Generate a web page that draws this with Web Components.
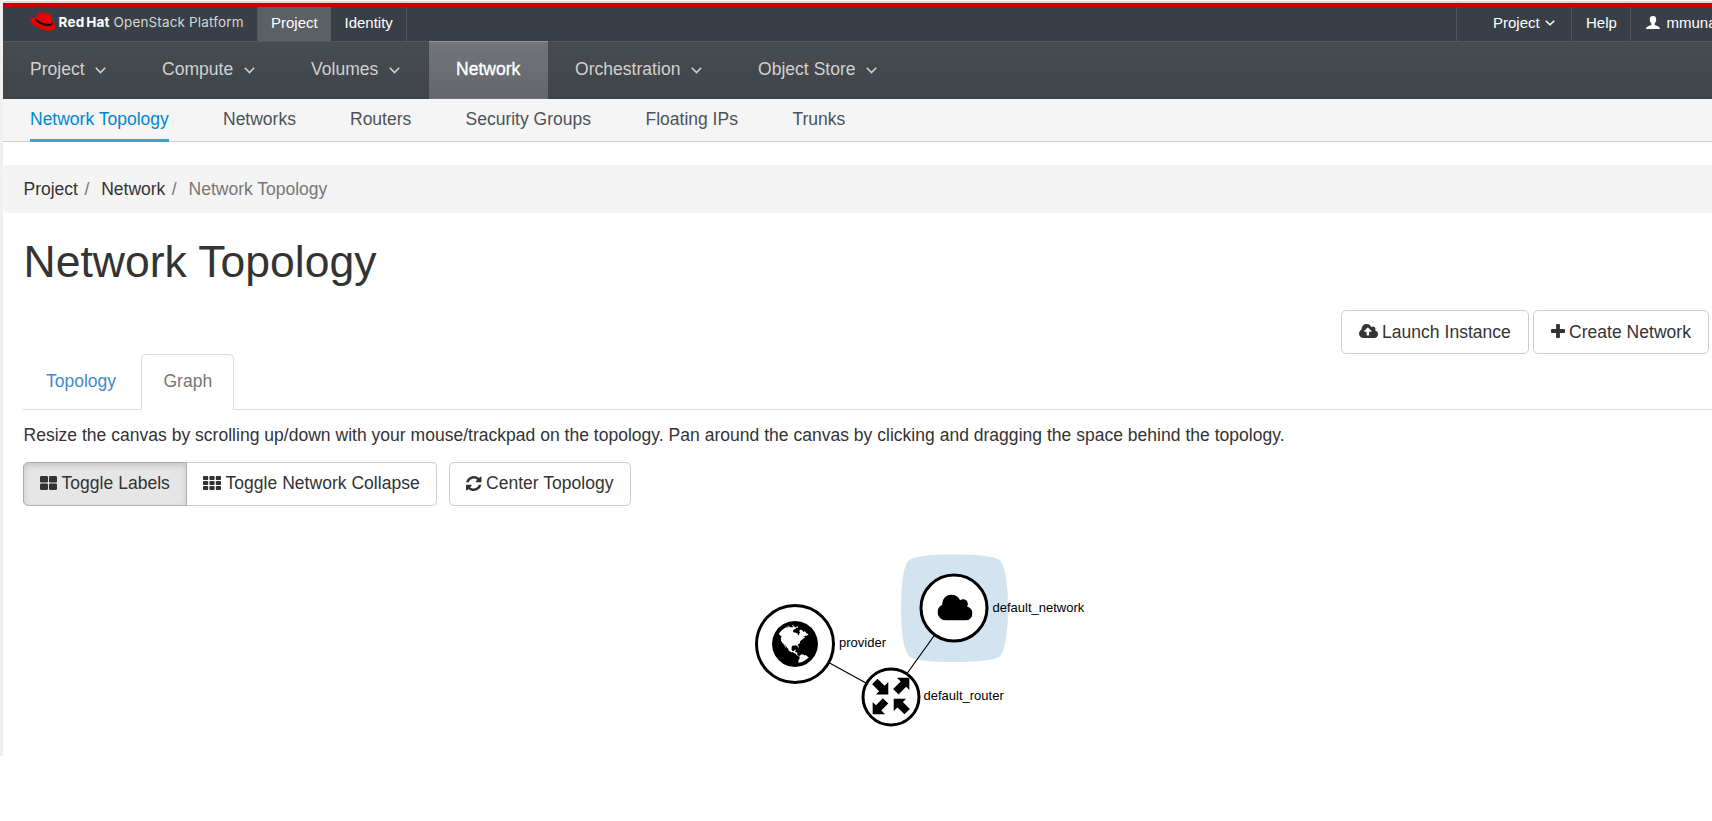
<!DOCTYPE html>
<html lang="en">
<head>
<meta charset="utf-8">
<title>Network Topology</title>
<style>
html,body{margin:0;height:821px;overflow:hidden;background:#fff;font-family:"Liberation Sans",Arial,sans-serif;font-size:17.5px;color:#333}
</style>
</head>
<body>
<os-app></os-app>
<script>
const GLYPHS = {
  cloud: ['64 128 1920 1408', '<path d="M1984 1152q0 159-112.5 271.5t-271.5 112.5h-1088q-185 0-316.5-131.5t-131.5-316.5q0-132 71-241.5t187-163.5q-2-28-2-43 0-212 150-362t362-150q158 0 286.5 88t187.5 230q70-62 166-62 106 0 181 75t75 181q0 75-41 138 129 30 213 134.5t84 239.5z"/>'],
  upload: ['64 128 1920 1408', '<path d="M1344 864q0-14-9-23l-352-352q-9-9-23-9t-23 9l-351 351q-10 12-10 24 0 14 9 23t23 9h224v352q0 13 9.5 22.5t22.5 9.5h192q13 0 22.5-9.5t9.5-22.5v-352h224q13 0 22.5-9.5t9.5-22.5zm640 288q0 159-112.5 271.5t-271.5 112.5h-1088q-185 0-316.5-131.5t-131.5-316.5q0-130 70-240t188-165q-2-30-2-43 0-212 150-362t362-150q156 0 285.5 87t188.5 231q71-62 166-62 106 0 181 75t75 181q0 76-41 138 130 31 213.5 135.5t83.5 238.5z"/>'],
  plus: ['192 128 1408 1408', '<path d="M1600 736v192q0 40-28 68t-68 28h-416v416q0 40-28 68t-68 28h-192q-40 0-68-28t-28-68v-416h-416q-40 0-68-28t-28-68v-192q0-40 28-68t68-28h416v-416q0-40 28-68t68-28h192q40 0 68 28t28 68v416h416q40 0 68 28t28 68z"/>'],
  refresh: ['128 128 1536 1536', '<path d="M1639 1056q0 5-1 7-64 268-268 434.5t-478 166.5q-146 0-282.5-55t-243.5-157l-129 129q-19 19-45 19t-45-19-19-45v-448q0-26 19-45t45-19h448q26 0 45 19t19 45-19 45l-137 137q71 66 161 102t187 36q134 0 250-65t186-179q11-17 53-117 8-23 30-23h192q13 0 22.5 9.5t9.5 22.5zm25-800v448q0 26-19 45t-45 19h-448q-26 0-45-19t-19-45 19-45l138-138q-148-137-349-137-134 0-250 65t-186 179q-11 17-53 117-8 23-30 23h-199q-13 0-22.5-9.5t-9.5-22.5v-7q65-268 270-434.5t480-166.5q146 0 284 55.5t245 156.5l130-129q19-19 45-19t45 19 19 45z"/>'],
  large: ['0 0 17 14', '<rect width="8" height="6.5" rx="1.2"/><rect x="9" width="8" height="6.5" rx="1.2"/><rect y="7.5" width="8" height="6.5" rx="1.2"/><rect x="9" y="7.5" width="8" height="6.5" rx="1.2"/>'],
  grid: ['0 0 18 14', [0,5,10].map(y => [0,6.4,12.8].map(x => `<rect x="${x}" y="${y}" width="5.2" height="4" rx=".8"/>`).join('')).join('')],
  down: ['0 0 11 7', '<path d="M.8.8 5.5 5.5 10.2.8" fill="none" stroke="currentColor" stroke-width="1.6"/>'],
  user: ['0 0 14 13', '<path d="M7 0C9.500 0 10.300 1.700 10.200 3.800 10.100 5.700 9.300 6.800 8.700 7.500V9C9.800 9.700 13.900 10.200 14 13H0C.1 10.200 4.200 9.700 5.300 9V7.500C4.700 6.800 3.900 5.700 3.800 3.800 3.700 1.700 4.500 0 7 0Z"/>'],
  globe: ['0 128 1536 1536', '<path d="M768 128q209 0 385.500 103t279.500 279.500 103 385.500-103 385.500-279.500 279.500-385.500 103-385.500-103-279.500-279.500-103-385.500 103-385.500 279.500-279.500 385.500-103zm274 521q-2 1-9.500 9.500t-13.500 9.500q2 0 4.500-5t5-11 3.500-7q6-7 22-15 14-6 52-12 34-8 51 11-2-2 9.500-13t14.500-12q3-2 15-4.500t15-7.500l2-22q-12 1-17.500-7t-6.500-21q0 2-6 8 0-7-4.500-8t-11.500 1-9 1q-10-3-15-7.500t-8-16.500-4-15q-2-5-9.500-11t-9.500-10q-1-2-2.500-5.500t-3-6.500-4-5.500-5.500-2.500-7 5-7.500 10-4.500 5q-3-2-6-1.500t-4.500 1-4.500 3-5 3.500q-3 2-8.500 3t-8.500 2q15-5-1-11-10-4-16-3 9-4 7.500-12t-8.500-14h5q-1-4-8.500-8.500t-17.500-8.500-13-6q-8-5-34-9.500t-33-.5q-5 6-4.500 10.500t4 14 3.500 12.500q1 6-5.500 13t-6.500 12q0 7 14 15.500t10 21.500q-3 8-16 16t-16 12q-5 8-1.500 18.500t10.500 16.500q2 2 1.500 4t-3.500 4.500-5.500 4-6.500 3.500l-3 2q-11 5-20.500-6t-13.500-26q-7-25-16-30-23-8-29 1-5-13-41-26-25-9-58-4 6-1 0-15-7-15-19-12 3-6 4-17.500t1-13.500q3-13 12-23 1-1 7-8.500t9.500-13.500.5-6q35 4 50-11 5-5 11.500-17t10.500-17q9-6 14-5.500t14.500 5.500 14.500 5q14 1 15.500-11t-7.500-20q12 1 3-17-4-7-8-9-12-4-27 5-8 4 2 8-1-1-9.500 10.500t-16.500 17.500-16-5q-1-1-5.500-13.500t-9.500-13.500q-8 0-16 15 3-8-11-15t-24-8q19-12-8-27-7-4-20.500-5t-19.500 4q-5 7-5.500 11.500t5 8 10.500 5.500 11.500 4 8.500 3q14 10 8 14-2 1-8.500 3.500t-11.500 4.500-6 4q-3 4 0 14t-2 14q-5-5-9-17.500t-7-16.500q7 9-25 6l-10-1q-4 0-16 2t-20.500 1-13.500-8q-4-8 0-20 1-4 4-2-4-3-11-9.500t-10-8.500q-46 15-94 41 6 1 12-1 5-2 13-6.500t10-5.500q34-14 42-7l5-5q14 16 20 25-7-4-30-1-20 6-22 12 7 12 5 18-4-3-11.500-10t-14.500-11-15-5q-16 0-22 1-146 80-235 222 7 7 12 8 4 1 5 9t2.500 11 11.500-3q9 8 3 19 1-1 44 27 19 17 21 21 3 11-10 18-1-2-9-9t-9-4q-3 5 .5 18.500t10.500 12.500q-7 0-9.500 16t-2.500 35.500-1 23.500l2 1q-3 12 5.500 34.500t21.500 19.500q-13 3 20 43 6 8 8 9 3 2 12 7.500t15 10 10 10.500q4 5 10 22.500t14 23.500q-2 6 9.500 20t10.500 23q-1 0-2.500 1t-2.500 1q3 7 15.500 14t15.500 13q1 3 2 10t3 11 8 2q2-20-24-62-15-25-17-29-3-5-5.500-15.500t-4.500-14.500q2 0 6 1.500t8.500 3.500 7.500 4 2 3q-3 7 2 17.500t12 18.500 17 19 12 13q6 6 14 19.500t0 13.500q9 0 20 10.500t17 19.500q5 8 8 26t5 24q2 7 8.500 13.500t12.500 9.500l16 8 13 7q5 2 18.500 10.500t21.500 11.500q10 4 16 4t14.500-2.500 13.500-3.500q15-2 29 15t21 21q36 19 55 11-2 1 .5 7.500t8 15.500 9 14.500 5.500 8.500q5 6 18 15t18 15q6-4 7-9-3 8 7 20t18 10q14-3 14-32-31 15-49-18 0-1-2.500-5.500t-4-8.500-2.500-8.500 0-7.500 5-3q9 0 10-3.500t-2-12.500-4-13q-1-8-11-20t-12-15q-5 9-16 8t-16-9q0 1-1.500 5.500t-1.500 6.500q-13 0-15-1 1-3 2.500-17.500t3.500-22.500q1-4 5.500-12t7.500-14.500 4-12.500-4.500-9.500-17.500-2.500q-19 1-26 20-1 3-3 10.500t-5 11.500-9 7q-7 3-24 2t-24-5q-13-8-22.500-29t-9.500-37q0-10 2.500-26.500t3-25-5.500-24.500q3-2 9-9.500t10-10.500q2-1 4.500-1.500t4.500 0 4-1.500 3-6q-1-1-4-3-3-3-4-3 7 3 28.500-1.500t27.500 1.500q15 11 22-2 0-1-2.500-9.500t-.5-13.500q5 27 29 9 3 3 15.500 5t17.500 5q3 2 7 5.500t5.500 4.500 5-.5 8.500-6.500q10 14 12 24 11 40 19 44 7 3 11 2t4.500-9.500 0-14-1.500-12.500l-1-8v-18l-1-8q-15-3-18.500-12t1.500-18.500 15-18.500q1-1 8-3.500t15.500-6.500 12.500-8q21-19 15-35 7 0 11-9-1 0-5-3t-7.500-5-4.500-2q9-5 2-16 5-3 7.500-11t7.500-10q9 12 21 2 7-8 1-16 5-7 20.500-10.500t18.500-9.500q7 2 8-2t1-12 3-12q4-5 15-9t13-5l17-11q3-4 0-4 18 2 31-11 10-11-6-20 3-6-3-9.500t-15-5.500q3-1 11.500-.5t10.500-1.500q15-10-7-16-17-5-43 12zm-163 877q206-36 351-189-3-3-12.500-4.500t-12.500-3.500q-18-7-24-8 1-7-2.500-13t-8-9-12.500-8-11-7q-2-2-7-6t-7-5.500-7.500-4.500-8.500-2-10 1l-3 1q-3 1-5.500 2.500t-5.500 3-4 3 0 2.500q-21-17-36-22-5-1-11-5.500t-10.500-7-10-1.500-11.500 7q-5 5-6 15t-2 13q-7-5 0-17.500t2-18.500q-3-6-10.500-4.500t-12 4.500-11.500 8.500-9 6.500-8.500 5.500-8.500 7.500q-3 4-6 12t-5 11q-2-4-11.500-6.500t-9.500-5.500q2 10 4 35t5 38q7 31-12 48-27 25-29 40-4 22 12 26 0 7-8 20.500t-7 21.500q0 6 2 16z"/>']
};
const define = (name, css, html) => customElements.define(name, class extends HTMLElement {
  constructor() {
    super();
    const t = document.createElement('template');
    t.innerHTML = `<style>${css}</style>${html}`;
    this.attachShadow({mode: 'open'}).append(t.content.cloneNode(true));
  }
});

customElements.define('os-icon', class extends HTMLElement {
  connectedCallback() {
    if (this.shadowRoot) return;
    const [box, body] = GLYPHS[this.getAttribute('name')];
    this.attachShadow({mode: 'open'}).innerHTML = `<style>:host{display:block;flex:none}svg{display:block;width:100%;height:100%}</style><svg viewBox="${box}" preserveAspectRatio="none" fill="currentColor">${body}</svg>`;
  }
});

define('os-brand', ':host{display:block;width:254px;height:34px}svg{display:block}', `
<svg width="254" height="34" viewBox="3 7 254 34">
  <path d="M30.300 19.500C30.800 17.800 33.500 17.600 36 18L37.400 14.200C38 12.600 39.500 12.200 41 12.500L44 13.300C46 12.900 48.600 13.500 50 14.600 51.300 15.600 51.700 18 52.300 20.800 54.800 23 56 26.500 54.300 29 52.300 31.600 46.500 31.200 40 28.600 34.500 26.200 29.500 22.700 30.300 19.500Z" fill="#e00"/>
  <path d="M36 17.900C37.500 21.300 47 25.200 51.800 23.300L52.300 21C53.100 23.500 52.700 25.200 50.300 25.900 46 27 36 23 35.200 19.800Z" fill="#111"/>
  <g fill="#fff" font-size="13.500" font-family="Inter"><text x="58.500" y="26.700" textLength="51" font-weight="700" word-spacing="-1.500">Red Hat</text>
  <text x="113.500" y="26.700" textLength="130" fill="#d5d6d8">OpenStack Platform</text></g>
</svg>`);

define('os-topbar', `
:host{display:flex;height:34px;background:#393f46;border-top:4px solid #c00;color:#fff;font-size:15px;box-sizing:content-box}
div{box-sizing:border-box;height:34px;line-height:31px;white-space:nowrap;flex:none}
.on{width:74px;background:#5a6064;padding-left:13px;border-left:1px solid #53575c}
.id{width:76px;padding-left:13.5px;border-right:1px solid #53575c}
.fill{flex:1}
.r{border-left:1px solid #53575c;display:flex;align-items:center;line-height:31px;padding-bottom:3px}
.p{width:115px;padding-left:36px;gap:5.500px}.h{width:59px;padding-left:14px}.u{width:82px;padding-left:15px;gap:6.500px;overflow:hidden}
.p os-icon{width:10px;height:6px}.u os-icon{width:14px;height:13px}`,
`<os-brand></os-brand><div class="on">Project</div><div class="id">Identity</div><div class="fill"></div>
<div class="r p">Project<os-icon name="down"></os-icon></div><div class="r h">Help</div><div class="r u"><os-icon name="user"></os-icon>mmuna</div>`);

define('os-nav-item', `
:host{display:flex;box-sizing:border-box;height:58px;padding:0 29px 1px 27px;align-items:center;justify-content:space-between;color:#d1d1d1;white-space:nowrap;letter-spacing:.03px}
:host([active]){background:linear-gradient(#72757a,#64666b);color:#fff;box-shadow:inset 0 1px #949699,inset 0 -1px #6f7276;-webkit-text-stroke:.35px #fff}
:host([active]) os-icon{display:none}
os-icon{width:11px;height:7px;margin-top:1px}`, '<slot></slot><os-icon name="down"></os-icon>');

define('os-mainnav', `
:host{display:flex;height:58px;background:linear-gradient(#474c50,#3f4448);box-shadow:inset 0 1px #53575c}`,
[['Project',132],['Compute',149],['Volumes',145],['Network',119],['Orchestration',183],['Object Store',175]].map(([t,w]) =>
`<os-nav-item style="width:${w}px" ${t==='Network'?'active':''}>${t}</os-nav-item>`).join(''));

define('os-subnav', `
:host{display:flex;gap:54px;box-sizing:border-box;height:43px;background:#f5f5f5;border-bottom:1px solid #ccc;padding-left:27px;color:#4d5258}
span{height:42px;box-sizing:border-box;line-height:40px;white-space:nowrap}
.on{height:43px;color:#0088ce;border-bottom:3px solid #39a0d6}`,
[['Network Topology',139],['Networks',73],['Routers',61.500],['Security Groups',126],['Floating IPs',93],['Trunks',53]].map(([t,w],i) =>
`<span style="width:${w}px" class="${i?'':'on'}">${t}</span>`).join(''));

define('os-breadcrumb', `
:host{display:flex;height:48px;line-height:48px;margin-top:23px;padding-left:20.500px;background:#f4f4f4;border-radius:5px 0 0 5px;white-space:pre}
i{font-style:normal;color:#777;width:23.200px;padding-left:6.500px;box-sizing:border-box}em{font-style:normal;color:#777}`,
'<span>Project</span><i>/</i><span>Network</span><i>/</i><em>Network Topology</em>');

define('os-button', `
:host{display:flex;box-sizing:border-box;height:44px;padding:0 0 2px 16px;align-items:center;gap:4.500px;border:1px solid #ccc;border-radius:5px;background:#fff;white-space:nowrap;letter-spacing:.03px}
:host([first]){border-radius:5px 0 0 5px}
:host([last]){border-radius:0 5px 5px 0;border-left:0}
:host([pressed]){background:#e6e6e6;border-color:#adadad;box-shadow:inset 0 3px 6px rgba(0,0,0,.14)}`,
'<slot name="icon"></slot><slot></slot>');
const button = (label, w, icon, iw, ih, attrs = '') =>
  `<os-button style="width:${w}px" ${attrs}><os-icon slot="icon" name="${icon}" style="width:${iw}px;height:${ih}px"></os-icon>${label}</os-button>`;

define('os-actions', ':host{display:flex;justify-content:flex-end;gap:4px;padding-right:3px}os-button{padding-bottom:0;padding-left:16.500px}os-icon{margin-bottom:2px}',
  button('Launch Instance',188,'upload',19,14) + button('Create Network',176,'plus',14,14));

define('os-tabs', `
:host{display:flex;height:56px;margin-left:20px;box-sizing:border-box;border-bottom:1px solid #ddd}
div{box-sizing:border-box;height:56px;line-height:53px}
.a{width:118px;padding-left:23px;padding-top:1px;color:#428bca}
.b{width:93px;padding-left:21.500px;border:1px solid #ddd;border-bottom-color:#fff;border-radius:5px 5px 0 0;background:#fff;color:#777}`,
'<div class="a">Topology</div><div class="b">Graph</div>');

define('os-tools', ':host{display:flex;padding-left:20px}.gap{width:12px}',
  button('Toggle Labels',164,'large',17,14,'first pressed') + button('Toggle Network Collapse',250,'grid',18,14,'last') + '<span class="gap"></span>' + button('Center Topology',182,'refresh',15.5,15));

define('topology-node', `
:host{position:absolute;transform:translate(-50%,-50%);display:flex;box-sizing:border-box;align-items:center;justify-content:center;border:3px solid #000;border-radius:50%;background:#fff;color:#000}
::slotted(span){position:absolute;left:calc(100% + 7px);font-size:13px;line-height:16px;white-space:nowrap;margin-top:-2px}`, '<slot></slot>');

define('topology-canvas', `
:host{display:block;position:relative;height:250px}
.links{position:absolute;inset:0}
`, `<svg class="links" width="1709" height="250" viewBox="3 506 1709 250">
<path d="M954 554.500C975 554.500 991 555.500 999 559.500 1005 563.500 1008 585 1008 608S1005 653 999 657C991 661 975 662 954 662S917 661 910 657C903 652 901 630 901 608S903 563.500 910 559.500C917 555.500 933 554.500 954 554.500Z" fill="#d2e4f0"/>
<path d="M795 644 890.500 696.500 954 608" fill="none" stroke="#000" stroke-width="1.200"/></svg>
<topology-node style="left:792px;top:138px;width:80px;height:80px"><os-icon name="globe" style="width:46px;height:46px"></os-icon><span style="margin-top:-3px">provider</span></topology-node>
<topology-node style="left:951px;top:102px;width:69px;height:69px"><os-icon name="cloud" style="width:35px;height:26px;margin:-2px 0 0 1px"></os-icon><span style="margin-top:-1px">default_network</span></topology-node>
<topology-node style="left:887.500px;top:190.500px;width:59px;height:59px"><svg width="41" height="41" viewBox="0 0 38 38" style="flex:none;margin-top:-1px"><path d="M16.500 17.500V6L13 9.400 6.500 3 1.500 8 8 14.500 5 17.500Z"/><path d="M36 2V13.500L33 10.500 26 17.500 21 12.500 28 5.500 24.500 2Z"/><path d="M2 36V24.500L5 27.500 11.500 21 16.500 26 10 32.500 13.500 36Z"/><path d="M21.500 21.500V33L25 29.600 31.500 36 36.500 31 30 24.500 33 21.500Z"/></svg><span style="left:calc(100% + 6.500px)">default_router</span></topology-node>`);

define('os-page', `
:host{display:block;box-sizing:border-box;height:756px;border-left:3px solid #f0f0f0;overflow:hidden;position:relative}
.edge{height:2px;margin-top:1px;background:#d9dbde}
h1{font-size:44.500px;font-weight:400;line-height:52px;margin:23px 0 0 20.500px;height:74px;white-space:nowrap}
p{margin:14px 0 16px 20.500px;line-height:22px;white-space:nowrap;letter-spacing:.018px}`, `
<div class="edge"></div><os-topbar></os-topbar><os-mainnav></os-mainnav><os-subnav></os-subnav><os-breadcrumb></os-breadcrumb>
<h1>Network Topology</h1><os-actions></os-actions><os-tabs></os-tabs>
<p>Resize the canvas by scrolling up/down with your mouse/trackpad on the topology. Pan around the canvas by clicking and dragging the space behind the topology.</p>
<os-tools></os-tools><topology-canvas></topology-canvas>`);
define('os-app', ':host{display:block}', '<os-page></os-page>');
</script>
</body>
</html>
